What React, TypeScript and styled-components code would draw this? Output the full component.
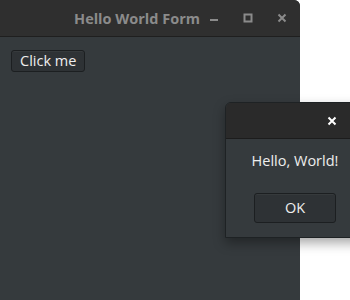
import React from 'react';
import styled, { createGlobalStyle } from 'styled-components';

const Global = createGlobalStyle`
  html, body {
    margin: 0;
    padding: 0;
    background: #ffffff;
    font-family: "Open Sans", "DejaVu Sans", sans-serif;
  }
`;

const Stage = styled.div`
  position: relative;
  width: 350px;
  height: 300px;
  overflow: hidden;
`;

const Window = styled.div`
  width: 300px;
  height: 300px;
  display: flex;
  flex-direction: column;
  background: #353a3d;
  border-top-right-radius: 6px;
  overflow: hidden;
`;

const TitleBar = styled.div`
  height: 36px;
  flex: none;
  display: flex;
  align-items: center;
  background: #2f2f2f;
  border-bottom: 1px solid #1f1f1f;
  padding-right: 10px;
`;

const Title = styled.div`
  flex: 1;
  text-align: right;
  padding-right: 6px;
  color: #8b8b8b;
  font-weight: 700;
  font-size: 14.5px;
`;

const Controls = styled.div`
  display: flex;
  align-items: center;
  gap: 18px;
`;

const IconBtn = styled.div`
  width: 16px;
  height: 16px;
  display: flex;
  align-items: center;
  justify-content: center;
`;

const Body = styled.div`
  flex: 1;
  padding: 12px 11px;
`;

const Button = styled.button<{ $wide?: boolean }>`
  font-family: "Open Sans", "DejaVu Sans", sans-serif;
  font-size: 14.5px;
  color: #eeeeee;
  background: #2e3235;
  border: 1px solid #1c1f21;
  border-radius: 3px;
  padding: 0 8px;
  height: ${p => (p.$wide ? '30px' : '22px')};
  width: ${p => (p.$wide ? '82px' : 'auto')};
  box-shadow: inset 0 1px 0 rgba(255, 255, 255, 0.04);
  line-height: 20px;
`;

const Dialog = styled.div`
  position: absolute;
  left: 225px;
  top: 102px;
  width: 140px;
  height: 136px;
  box-sizing: border-box;
  display: flex;
  flex-direction: column;
  background: #353a3d;
  border: 1px solid #1e2224;
  border-top-left-radius: 6px;
  overflow: hidden;
  box-shadow: 0 5px 12px rgba(0, 0, 0, 0.35);
`;

const DialogBar = styled.div`
  height: 35px;
  flex: none;
  display: flex;
  align-items: center;
  justify-content: flex-end;
  padding-right: 27px;
  background: #2a2a2a;
  border-bottom: 1px solid #1c1c1c;
`;

const DialogBody = styled.div`
  flex: 1;
  display: flex;
  flex-direction: column;
  align-items: center;
  padding-top: 12px;
  gap: 22px;
`;

const Message = styled.div`
  color: #eeeeee;
  font-size: 14.5px;
  line-height: 20px;
`;

const Cross = ({ color }: { color: string }) => (
  <svg width="10" height="10" viewBox="0 0 10 10">
    <path d="M1.5 1.5 L8.5 8.5 M8.5 1.5 L1.5 8.5" stroke={color} strokeWidth="2" />
  </svg>
);

export default function App() {
  return (
    <Stage>
      <Global />
      <Window>
        <TitleBar>
          <Title>Hello World Form</Title>
          <Controls>
            <IconBtn>
              <svg width="10" height="10" viewBox="0 0 10 10">
                <rect x="1" y="6" width="8" height="2" fill="#8b8b8b" />
              </svg>
            </IconBtn>
            <IconBtn>
              <svg width="10" height="10" viewBox="0 0 10 10">
                <rect x="1.5" y="1.5" width="7" height="7" fill="none" stroke="#8b8b8b" strokeWidth="2" />
              </svg>
            </IconBtn>
            <IconBtn>
              <Cross color="#8b8b8b" />
            </IconBtn>
          </Controls>
        </TitleBar>
        <Body>
          <Button>Click me</Button>
        </Body>
      </Window>
      <Dialog>
        <DialogBar>
          <Cross color="#ffffff" />
        </DialogBar>
        <DialogBody>
          <Message>Hello, World!</Message>
          <Button $wide>OK</Button>
        </DialogBody>
      </Dialog>
    </Stage>
  );
}
